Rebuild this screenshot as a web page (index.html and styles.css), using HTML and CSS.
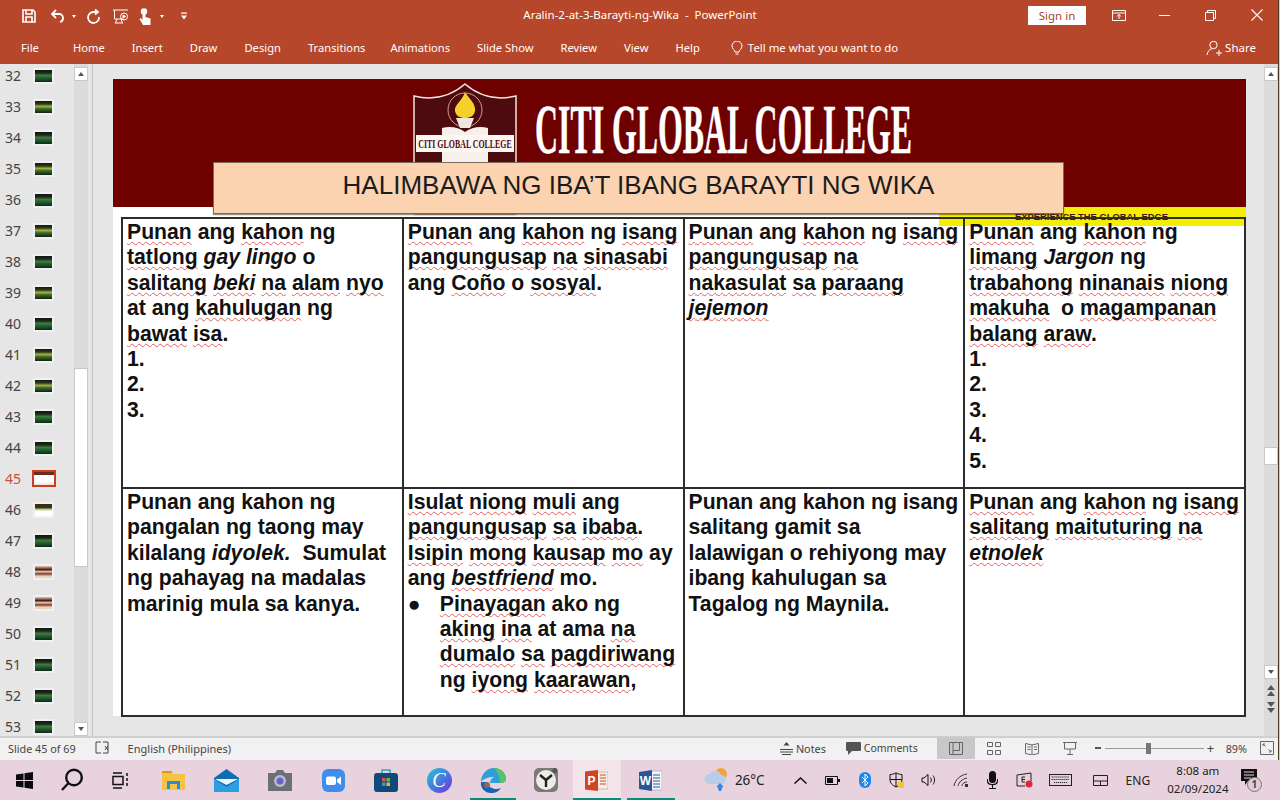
FILE: index.html
```html
<!DOCTYPE html>
<html lang="en">
<head>
<meta charset="utf-8">
<title>Aralin-2-at-3-Barayti-ng-Wika - PowerPoint</title>
<link rel="stylesheet" href="styles.css">
</head>
<body>
<div class="app">
  <header class="ribbon">
    <div class="titlebar">
      <div class="qat">
        <svg class="q q-save" width="16" height="16" viewBox="0 0 16 16" fill="none" stroke="#fff" stroke-width="1.6"><path d="M2 2h10l2 2v10H2z"/><path d="M5 2v4h6V2M5 14V9h6v5"/></svg>
        <svg class="q q-undo" width="16" height="16" viewBox="0 0 16 16" fill="none" stroke="#fff" stroke-width="1.8"><path d="M6 2 2 6l4 4"/><path d="M2 6h7a4 4 0 0 1 4 4 4 4 0 0 1-3 4"/></svg>
        <span class="caret q-c1"></span>
        <svg class="q q-redo" width="16" height="16" viewBox="0 0 16 16" fill="none" stroke="#fff" stroke-width="1.8"><path d="M10 1.500 13 4l-3 2.500"/><path d="M12 4H8a5.500 5.500 0 1 0 6 5"/></svg>
        <svg class="q q-show" width="17" height="17" viewBox="0 0 17 17" fill="none" stroke="#fff" stroke-width="1"><path d="M1 2h15M2.500 2v9h9M5 11l-1.500 4M9 11l1.500 4M3 15h8"/><circle cx="12" cy="8.500" r="3.500"/><path d="m11 7 2.500 1.500L11 10z" fill="#fff"/></svg>
        <svg class="q q-touch" width="13" height="17" viewBox="0 0 13 17" fill="#fff"><circle cx="5" cy="3.500" r="3.200"/><path d="M3.500 4h3v5l5 1.500V17H4L.5 11l1-1 2 2z"/></svg>
        <span class="caret q-c2"></span>
        <svg class="q q-cust" width="6" height="8" viewBox="0 0 7 8" fill="#fff"><path d="M0 0h7v1.300H0zM0 3.500h7L3.500 8z"/></svg>
      </div>
      <div class="doctitle">Aralin-2-at-3-Barayti-ng-Wika&nbsp; -&nbsp; PowerPoint</div>
      <div class="winctl">
        <button class="signin">Sign in</button>
        <svg class="wc wc-opt" width="14" height="11" viewBox="0 0 14 11" fill="none" stroke="#fff"><path d="M.5.500h13v10H.5zM.5 3h13M7 9V4.500M5 6.500l2-2 2 2"/></svg>
        <svg class="wc wc-min" width="11" height="1" viewBox="0 0 11 1"><path d="M0 0h11v1H0z" fill="#fff"/></svg>
        <svg class="wc wc-max" width="11" height="11" viewBox="0 0 11 11" fill="none" stroke="#fff"><path d="M.5 2.500h8v8h-8zM2.500 2.500v-2h8v8h-2"/></svg>
        <svg class="wc wc-close" width="12" height="12" viewBox="0 0 12 12" stroke="#fff" stroke-width="1.100"><path d="m.5.500 11 11M11.500.500l-11 11"/></svg>
      </div>
    </div>
    <nav class="tabs">
      <span class="tab tab-file">File</span>
      <span class="tab">Home</span><span class="tab">Insert</span><span class="tab">Draw</span><span class="tab">Design</span><span class="tab">Transitions</span><span class="tab tab-anim">Animations</span><span class="tab">Slide Show</span><span class="tab">Review</span><span class="tab">View</span><span class="tab">Help</span>
      <span class="tellme">
        <svg width="12" height="15" viewBox="0 0 12 15" fill="none" stroke="#fff"><path d="M4 11c0-2-3-3-3-6a5 5 0 0 1 10 0c0 3-3 4-3 6zM4.500 13h3"/></svg>
        <span class="tellme-t">Tell me what you want to do</span>
      </span>
      <span class="share">
        <svg width="16" height="16" viewBox="0 0 16 16" fill="none" stroke="#fff"><circle cx="7.500" cy="5" r="3.700"/><path d="M1 15c.5-3.500 2.500-6 5-6.200M10 13h6M13 10v6"/></svg>
        Share
      </span>
    </nav>
  </header>

  <main class="workspace">
    <aside class="pane">
      <ol class="thumbs">
        <li class="row"><span class="num">32</span><span class="thumb t-green"></span></li>
        <li class="row"><span class="num">33</span><span class="thumb t-yel"></span></li>
        <li class="row"><span class="num">34</span><span class="thumb t-green"></span></li>
        <li class="row"><span class="num">35</span><span class="thumb t-yel"></span></li>
        <li class="row"><span class="num">36</span><span class="thumb t-green"></span></li>
        <li class="row"><span class="num">37</span><span class="thumb t-yel"></span></li>
        <li class="row"><span class="num">38</span><span class="thumb t-green"></span></li>
        <li class="row"><span class="num">39</span><span class="thumb t-yel"></span></li>
        <li class="row"><span class="num">40</span><span class="thumb t-green"></span></li>
        <li class="row"><span class="num">41</span><span class="thumb t-yel"></span></li>
        <li class="row"><span class="num">42</span><span class="thumb t-yel"></span></li>
        <li class="row"><span class="num">43</span><span class="thumb t-green"></span></li>
        <li class="row"><span class="num">44</span><span class="thumb t-green"></span></li>
        <li class="row row-active"><span class="num">45</span><span class="thumb t-active"></span></li>
        <li class="row"><span class="num">46</span><span class="thumb t-white"></span></li>
        <li class="row"><span class="num">47</span><span class="thumb t-green"></span></li>
        <li class="row"><span class="num">48</span><span class="thumb t-peach"></span></li>
        <li class="row"><span class="num">49</span><span class="thumb t-peach"></span></li>
        <li class="row"><span class="num">50</span><span class="thumb t-green"></span></li>
        <li class="row"><span class="num">51</span><span class="thumb t-green"></span></li>
        <li class="row"><span class="num">52</span><span class="thumb t-green"></span></li>
        <li class="row"><span class="num">53</span><span class="thumb t-green"></span></li>
      </ol>
      <div class="sb sb-left">
        <span class="sbbtn up"></span>
        <span class="sbthumb"></span>
        <span class="sbbtn down"></span>
      </div>
    </aside>

    <section class="editor">
      <article class="slide">
        <div class="banner">
          <svg class="crest" width="104" height="132" viewBox="0 0 104 132">
            <path d="M1 13Q30 20 52 1Q74 20 103 13V132H1Z" fill="#4d0b10" stroke="#f3e3dc" stroke-width="1.500"/>
            <circle cx="52" cy="27" r="17" fill="none" stroke="#d9a08e"/>
            <path d="M52 9c4 7 11 11 10 19-1 5-5 7-10 7s-9-2-10-7c-1-6 7-10 10-19z" fill="#f3d12a"/>
            <path d="M43 35h18l-4 10h-10z" fill="#efe6e0"/>
            <path d="M29 45q13-3 23 4q10-7 23-4v80H29z" fill="#f6efea"/>
            <rect x="3" y="52" width="98" height="17" fill="#fbf7f3"/>
            <text class="crest-text" transform="translate(52 65) scale(1 1.500)" text-anchor="middle">CITI GLOBAL COLLEGE</text>
          </svg>
          <h1 class="college">CITI GLOBAL COLLEGE</h1>
        </div>
        <div class="yellow">EXPERIENCE THE GLOBAL EDGE</div>
        <div class="peach">HALIMBAWA NG IBA’T IBANG BARAYTI NG WIKA</div>
        <table class="grid">
          <tr class="r1">
            <td><u>Punan</u> ang <u>kahon</u> ng<br><u>tatlong</u> <i>gay lingo</i> o<br><u>salitang</u> <i><u>beki</u></i> <u>na</u> <u>alam</u> <u>nyo</u><br>at ang <u>kahulugan</u> ng<br><u>bawat</u> <u>isa</u>.<br>1.<br>2.<br>3.</td>
            <td><u>Punan</u> ang <u>kahon</u> ng <u>isang</u><br><u>pangungusap</u> <u>na</u> <u>sinasabi</u><br>ang <u>Coño</u> o <u>sosyal</u>.</td>
            <td><u>Punan</u> ang <u>kahon</u> ng <u>isang</u><br><u>pangungusap</u> <u>na</u><br><u>nakasulat</u> <u>sa</u> <u>paraang</u><br><i><u>jejemon</u></i></td>
            <td><u>Punan</u> ang <u>kahon</u> ng<br><u>limang</u> <i>Jargon</i> ng<br><u>trabahong</u> <u>ninanais</u> <u>niong</u><br><u>makuha</u>&nbsp; o <u>magampanan</u><br><u>balang</u> <u>araw</u>.<br>1.<br>2.<br>3.<br>4.<br>5.</td>
          </tr>
          <tr class="r2">
            <td>Punan ang kahon ng<br>pangalan ng taong may<br>kilalang <i>idyolek.</i>&nbsp; Sumulat<br>ng pahayag na madalas<br>marinig mula sa kanya.</td>
            <td><u>Isulat</u> <u>niong</u> <u>muli</u> ang<br><u>pangungusap</u> <u>sa</u> <u>ibaba</u>.<br><u>Isipin</u> <u>mong</u> <u>kausap</u> <u>mo</u> ay<br>ang <i><u>bestfriend</u></i> mo.
              <div class="bullet"><span class="dot">●</span><span><u>Pinayagan</u> ako ng<br><u>aking</u> <u>ina</u> at ama <u>na</u><br><u>dumalo</u> <u>sa</u> <u>pagdiriwang</u><br>ng <u>iyong</u> <u>kaarawan</u>,</span></div>
            </td>
            <td>Punan ang kahon ng isang<br>salitang gamit sa<br>lalawigan o rehiyong may<br>ibang kahulugan sa<br>Tagalog ng Maynila.</td>
            <td><u>Punan</u> ang <u>kahon</u> ng <u>isang</u><br><u>salitang</u> <u>maituturing</u> <u>na</u><br><i><u>etnolek</u></i></td>
          </tr>
        </table>
      </article>
    </section>

    <div class="sb sb-right">
      <span class="sbbtn up"></span>
      <span class="sbthumb"></span>
      <span class="sbbtn down"></span>
      <svg class="pg" width="10" height="12" viewBox="0 0 10 12" fill="#555"><path d="M5 0l4 5H1zM5 6l4 5H1z"/></svg>
      <svg class="pg" width="10" height="12" viewBox="0 0 10 12" fill="#555"><path d="M1 0h8L5 5zM1 6h8l-4 5z"/></svg>
    </div>
  </main>

  <footer class="status">
    <span class="st-slide">Slide 45 of 69</span>
    <svg class="st-spell" width="15" height="14" viewBox="0 0 15 14" fill="none" stroke="#444"><path d="M6 1H1v11h5M8 1h5v11H8M10 5l3 4M13 5l-3 4"/></svg>
    <span class="st-lang">English (Philippines)</span>
    <span class="st-right">
      <svg class="st-notes" width="13" height="13" viewBox="0 0 13 13" fill="none" stroke="#444"><path d="M0 7.500h13M0 10h13M2 12.500h9"/><path d="m6.500 0 3 3.500h-6z" fill="#444" stroke="none"/></svg>
      <span class="st-t">Notes</span>
      <svg class="st-comm" width="15" height="13" viewBox="0 0 15 13" fill="#555"><path d="M1 0h13a1 1 0 0 1 1 1v7a1 1 0 0 1-1 1H6l-4 4V9H1a1 1 0 0 1-1-1V1a1 1 0 0 1 1-1z"/></svg>
      <span class="st-t st-t-comm">Comments</span>
      <span class="view view-on"><svg width="14" height="13" viewBox="0 0 14 13" fill="none" stroke="#666"><path d="M.5.500h13v12H.5zM4 .5v8h6.500v-8M4 8.500v4"/></svg></span>
      <span class="view"><svg width="14" height="13" viewBox="0 0 14 13" fill="none" stroke="#666"><path d="M.5.500h5v4h-5zM8.500.500h5v4h-5zM.5 8.500h5v4h-5zM8.500 8.500h5v4h-5z"/></svg></span>
      <span class="view"><svg width="14" height="13" viewBox="0 0 14 13" fill="none" stroke="#666"><path d="M.5 1.500 7 3l6.500-1.500v10L7 13 .5 11.500zM7 3v10M2.500 5h3M2.500 7.500h3M9 5h3M9 7.500h3"/></svg></span>
      <span class="view"><svg width="14" height="13" viewBox="0 0 14 13" fill="none" stroke="#666"><path d="M0 .5h14M1.500 .5v6.500h11V.5M7 7v5M4 12.500h6"/></svg></span>
      <span class="zm zm-minus"></span>
      <span class="slider"><span class="knob"></span></span>
      <span class="zm zm-plus">+</span>
      <span class="pct">89%</span>
      <svg class="fit" width="14" height="14" viewBox="0 0 14 14" fill="none" stroke="#666"><path d="M.5.500h13v13H.5zM3 3l2.500 2.500M3 3v2M3 3h2M11 11 8.500 8.500M11 11V9M11 11H9"/></svg>
    </span>
  </footer>

  <div class="taskbar">
    <span class="tb"><svg width="17" height="17" viewBox="0 0 17 17" fill="#0a0a0a"><path d="M0 2.500 7.500 1.500v6.500H0zM8.500 1.300 17 0v8H8.500zM0 9h7.500v6.500L0 14.500zM8.500 9H17v8l-8.500-1.300z"/></svg></span>
    <span class="tb"><svg width="24" height="24" viewBox="0 0 24 24" fill="none" stroke="#111" stroke-width="2.400"><circle cx="14" cy="9.500" r="7.800"/><path d="m8.500 15-6.500 7"/></svg></span>
    <span class="tb"><svg width="17" height="17" viewBox="0 0 17 17" fill="none" stroke="#111" stroke-width="1.500"><path d="M1 1h9M1 16h9M1 4.500h10v8H1zM15 1v3M15 6v3M15 11v3"/></svg></span>
    <span class="app-i first"><svg width="23" height="20" viewBox="0 0 23 20"><path d="M0 2h9l2 2H23v16H0z" fill="#f6c445"/><path d="M0 1h10v2H0z" fill="#d99a1c"/><path d="M5 11h13v8h-3v-5H8v5H5z" fill="#2b8bd6"/></svg></span>
    <span class="app-i"><svg width="25" height="23" viewBox="0 0 25 23"><path d="M12.500 0 25 9v14H0V9z" fill="#0f6db5"/><path d="M1 10h23L12.500 16z" fill="#eaf4fb"/><path d="M0 10l12.500 8L25 10v13H0z" fill="#2b9fe0"/></svg></span>
    <span class="app-i"><svg width="24" height="21" viewBox="0 0 24 21"><path d="M0 3h7l2-3h6l2 3h7v18H0z" fill="#6a6f78"/><circle cx="12" cy="11" r="6" fill="#b9bccd"/><circle cx="12" cy="11" r="3.500" fill="#6a63c9"/></svg></span>
    <span class="app-i"><svg width="23" height="23" viewBox="0 0 23 23"><rect width="23" height="23" rx="6" fill="#3f8ded"/><rect x="4" y="7.500" width="10" height="8.500" rx="2" fill="#fff"/><path d="m15 10.500 4-3v8.500l-4-3z" fill="#fff"/></svg></span>
    <span class="app-i"><svg width="24" height="24" viewBox="0 0 24 24"><path d="M8 5V2h8v3" fill="none" stroke="#2aa4c8" stroke-width="1.500"/><rect y="5" width="24" height="19" rx="3" fill="#0f4a78"/><path d="M8 10h3.500v3.500H8z" fill="#e0553a"/><path d="M12.500 10H16v3.500h-3.500z" fill="#74b53c"/><path d="M8 14.500h3.500V18H8z" fill="#2a9ad8"/><path d="M12.500 14.500H16V18h-3.500z" fill="#f2b91e"/></svg></span>
    <span class="app-i"><svg width="25" height="25" viewBox="0 0 25 25"><defs><linearGradient id="cv" x1="0" y1="0" x2="1" y2="1"><stop offset="0" stop-color="#26c6d6"/><stop offset=".6" stop-color="#4a6fe0"/><stop offset="1" stop-color="#7a2fd0"/></linearGradient></defs><circle cx="12.500" cy="12.500" r="12.500" fill="url(#cv)"/><text class="canva" x="12" y="19" text-anchor="middle">C</text></svg></span>
    <span class="app-i app-edge"><svg width="26" height="25" viewBox="0 0 26 25"><path d="M1 14C1 6 7 0 14 0c7 0 12 5 12 11 0 3-3 4-6 4H10c0-4 4-6 4-6-6 0-11 2-13 5z" fill="#2f9fd8"/><path d="M14 0c7 0 12 5 12 11 0 3-3 4-6 4 0-7-3-12-6-15z" fill="#55c46a"/><path d="M1 14c-1 6 4 11 10 11 5 0 8-2 10-5-4 2-8 1-11-1-2-2-2-3-2-5-3 0-5 0-7 0z" fill="#1663b8"/><circle cx="7" cy="17" r="3" fill="#8a6a5a"/></svg></span>
    <span class="app-i"><svg width="24" height="24" viewBox="0 0 24 24"><rect width="24" height="24" rx="5" fill="#7a7a7a"/><circle cx="12" cy="12" r="10" fill="#efece6"/><path d="M12 12 6 7M12 12l6-5M12 12v7" stroke="#222" stroke-width="2.400" fill="none"/><circle cx="21" cy="2.500" r="2.500" fill="#555"/></svg></span>
    <span class="tb-ppt"><svg width="23" height="21" viewBox="0 0 23 21"><path d="M9 2h14v17H9z" fill="#f4ede8" stroke="#d0b9ab"/><path d="M15 5h6M15 8h6M15 11h6M15 14h6" stroke="#d04a26"/><path d="M0 1.500 13 0v21L0 19.500z" fill="#d04423"/><text class="ppt-l" x="6.500" y="15" text-anchor="middle">P</text></svg></span>
    <span class="tb-word"><svg width="23" height="21" viewBox="0 0 23 21"><path d="M9 1h14v19H9z" fill="#f6f6f8" stroke="#b6bdcb"/><path d="M14 5h7M14 8h7M14 11h7M14 14h7M14 17h7" stroke="#2a5699"/><path d="M0 2 13 0v21L0 19z" fill="#2a5699"/><text class="ppt-l" x="6.500" y="15" text-anchor="middle">W</text></svg></span>
    <span class="weather">
      <svg width="24" height="26" viewBox="0 0 24 26"><circle cx="17" cy="7" r="6" fill="#f2a23a"/><path d="M5 17a5 5 0 0 1 1-10 6 6 0 0 1 11 1 4.500 4.500 0 0 1 1 9z" fill="#b9cce8"/><path d="M13 19l3-3 3 3-2 5h-2z" fill="#3a85e0"/></svg>
      <span>26°C</span>
    </span>
    <div class="tray">
      <span class="ti"><svg width="13" height="7" viewBox="0 0 13 7" fill="none" stroke="#111" stroke-width="1.500"><path d="m.5 6.500 6-5.500 6 5.500"/></svg></span>
      <span class="ti"><svg width="15" height="9" viewBox="0 0 15 9" fill="none" stroke="#111"><path d="M.5.500h12v8H.5z"/><path d="M2 2h6v5H2zM13 3h2v3h-2z" fill="#111" stroke="none"/></svg></span>
      <span class="ti"><svg width="12" height="16" viewBox="0 0 12 16"><rect width="12" height="16" rx="6" fill="#1f87e8"/><path d="m3 5 6 6-3 3V2l3 3-6 6" fill="none" stroke="#fff"/></svg></span>
      <span class="ti"><svg width="16" height="16" viewBox="0 0 16 16" fill="none" stroke="#111"><path d="M7 .8c-2 1.200-4 1.700-6 1.700v5c0 4 3 6 6 7.500 3-1.500 6-3.500 6-7.500v-5c-2 0-4-.5-6-1.700zM7 1v14M1 7.500h12"/><rect x="9" y="10" width="6" height="6" fill="#f3c62f" stroke="none"/></svg></span>
      <span class="ti"><svg width="16" height="14" viewBox="0 0 16 14" fill="none" stroke="#111"><path d="M1 5v4h2l4 3.500v-11L3 5zM9.500 4.500c1 1.500 1 3.500 0 5M12 2.500c2 2.500 2 6.500 0 9"/></svg></span>
      <span class="ti"><svg width="15" height="14" viewBox="0 0 15 14" fill="none" stroke="#333"><path d="M1 13C2 7 7 2 14 1M5 13c1-4 4-7 9-8M9 13c0-2 2-4 5-4"/><path d="M12 11h3v3h-3z" fill="#333" stroke="none"/></svg></span>
      <span class="ti"><svg width="11" height="18" viewBox="0 0 11 18" fill="#111"><rect x="2" width="7" height="12" rx="3.500"/><path d="M0 8h1v1.500c0 2.500 2 3.500 4.500 3.500s4.500-1 4.500-3.500V8h1v2c0 3-2 4-5 4.200V17h3v1H2v-1h3v-2.800C2 14 0 13 0 10z"/></svg></span>
      <span class="ti"><svg width="17" height="16" viewBox="0 0 17 16" fill="none" stroke="#222"><path d="M1 3 15 1v8M1 3v11h8"/><path d="M9 5H6v5h3M6 7.500h3"/><circle cx="13" cy="12" r="3.500" fill="#e0263c" stroke="none"/></svg></span>
      <span class="ti ti-kb"><svg width="23" height="12" viewBox="0 0 23 12" fill="none" stroke="#222"><rect x=".5" y=".5" width="22" height="11"/><path d="M2.500 3h18M2.500 5.500h18M5 8.500h13" stroke-dasharray="1.200 .8"/></svg></span>
      <span class="ti ti-pad"><svg width="15" height="11" viewBox="0 0 15 11" fill="none" stroke="#222"><path d="M.5.500h14v10H.5zM.5 6h14M7.500 6v4.500"/></svg></span>
      <span class="eng">ENG</span>
      <span class="clock"><span>8:08 am</span><span>02/09/2024</span></span>
      <span class="notif">
        <svg width="16" height="17" viewBox="0 0 16 17"><path d="M0 0h16v12H7l-3 4v-4H0z" fill="#111"/><path d="M3 3h10M3 6h10M3 9h7" stroke="#e8d4de"/></svg>
        <span class="badge">1</span>
      </span>
    </div>
  </div>
  <div class="edge"></div>
</div>
</body>
</html>
```
FILE: styles.css
```css
* { box-sizing: border-box; }
html, body { margin: 0; height: 100%; overflow: hidden; }
body { font-family: "Noto Sans", "Open Sans", sans-serif; background: #e6e6e6; }
.app { position: relative; width: 1280px; height: 800px; display: flex; flex-direction: column; }
button { font: inherit; border: 0; }

/* ribbon */
.ribbon { background: #b7472a; color: #fff; height: 64px; flex: none; }
.titlebar { height: 32px; display: flex; align-items: center; position: relative; }
.qat { display: flex; align-items: center; padding-left: 21px; }
.q { flex: none; display: block; }
.q-undo { margin-left: 13px; }
.q-c1 { margin-left: 6px; }
.q-redo { margin-left: 9px; }
.q-show { margin-left: 11px; }
.q-touch { margin-left: 10px; }
.q-c2 { margin-left: 8px; }
.q-cust { margin-left: 17px; }
.caret { width: 0; height: 0; border: 2.500px solid transparent; border-top: 3px solid #fff; border-bottom: 0; }
.doctitle { position: absolute; left: 0; right: 0; top: 7px; text-align: center; font-size: 11.500px; line-height: 16px; }
.winctl { margin-left: auto; display: flex; align-items: center; padding: 0 17px 2px 0; }
.signin { width: 58px; height: 19px; background: #fff; color: #a8452c; font-size: 11.500px; line-height: 19px; padding: 0; }
.wc { display: block; flex: none; }
.wc-opt { margin-left: 26px; }
.wc-min { margin-left: 33px; }
.wc-max { margin-left: 35px; }
.wc-close { margin-left: 35px; }
.tabs { height: 32px; display: flex; align-items: center; font-size: 11.200px; line-height: 16px; padding-left: 21px; }
.tab { margin-right: 27px; white-space: nowrap; }
.tab-file { margin-right: 34px; }
.tab-anim { margin-left: -2px; }
.tellme { display: flex; align-items: center; gap: 5px; margin-left: 4px; white-space: nowrap; }
.tellme-t { font-size: 11.400px; }
.share { margin-left: auto; margin-right: 24px; display: flex; align-items: center; gap: 3px; font-size: 11.500px; }

/* workspace */
.workspace { flex: none; height: 674px; display: flex; overflow: hidden; border-bottom: 2px solid #d0d0d0; }
.pane { width: 93px; flex: none; display: flex; border-right: 1px solid #c4c4c4; overflow: hidden; }
.thumbs { list-style: none; margin: -4px 0 0; padding: 0; width: 74px; flex: none; }
.row { height: 31px; display: flex; align-items: center; }
.num { width: 35px; padding-left: 5px; font-size: 14px; color: #444; line-height: 20px; }
.row-active .num { color: #c8503c; }
.thumb { display: block; width: 17px; height: 12px; box-shadow: 0 0 0 2px #f1f1f1; }
.t-green { background: linear-gradient(#10180f 0, #1c2a16 25%, #3e7a42 45%, #1e5a2c 70%, #0c2a18 100%); }
.t-yel { background: linear-gradient(#141a10 0, #2a3a18 25%, #a8b040 45%, #3a6a2a 65%, #10220f 100%); }
.t-white { background: linear-gradient(#3a2a14 0, #3a3418 30%, #b8c880 45%, #fff 60%); }
.t-peach { background: linear-gradient(#e8c8ac 0, #4a1a18 30%, #f0ccb0 48%, #7a3a30 65%, #f3d3b6 85%); }
.t-active { width: 24px; height: 17px; margin-left: -3px; border: 2px solid #c8401f; box-shadow: none; background: linear-gradient(#6a2a20 0 22%, #fff 22% 75%, #e8e0d8 100%); }

.sb { background: #dbdbdb; flex: none; width: 14px; display: flex; flex-direction: column; align-items: stretch; }
.sb-left { height: 672px; }
.sb-right { margin-right: 2px; }
.sbbtn { height: 14px; background: #fff; border: 1px solid #c8c8c8; flex: none; display: flex; align-items: center; justify-content: center; }
.sbbtn::before { content: ""; border: 3.500px solid transparent; }
.sbbtn.up::before { border-bottom: 4px solid #555; border-top: 0; }
.sbbtn.down::before { border-top: 4px solid #555; border-bottom: 0; }
.sb-left .up { margin-top: 3px; }
.sb-left .sbthumb { display: block; height: 199px; margin-top: 287px; background: #fff; border: 1px solid #c8c8c8; }
.sb-left .down { margin-top: auto; }
.sb-right .up { margin-top: 3px; }
.sb-right .sbthumb { display: block; height: 18px; margin-top: 366px; background: #fff; border: 1px solid #c8c8c8; }
.sb-right .down { margin-top: 200px; }
.pg { margin: 6px auto 0; display: block; }
.pg + .pg { margin-top: 5px; }

.editor { flex: 1; min-width: 0; padding: 15px 18px 0 20px; background: #e6e6e6; }
.slide { width: 1133px; height: 637px; background: #fff; position: relative; }
.banner { height: 128px; background: #6f0000; display: flex; align-items: flex-start; padding: 4px 0 0 300px; }
.crest { flex: none; display: block; overflow: visible; }
.crest-text { font: bold 7.900px "Liberation Serif", serif; fill: #4d0b10; }
.college { margin: 22px 0 0 18px; width: 375px; flex: none; font: bold 70px/50px "Liberation Serif", serif; color: #fff; white-space: nowrap; transform: scaleX(.455); transform-origin: left center; -webkit-text-stroke: .5px #fff; }
.yellow { position: absolute; left: 826px; top: 128px; width: 307px; height: 19px; background: #f4ee00; font: bold 9.400px/19px "Liberation Sans", Arial, sans-serif; color: #4a1410; padding-left: 76px; white-space: nowrap; }
.peach { position: absolute; z-index: 2; left: 100px; top: 83px; width: 851px; height: 52px; background: #fbd3b1; border: 1px solid #7c6a58; box-shadow: 0 1px 1px rgba(60,40,20,.5); font: 26px/44px "Liberation Sans", Arial, sans-serif; color: #1c1c1c; text-align: center; white-space: nowrap; }
.grid { position: relative; margin: 10px 0 0 8px; width: 1125px; border-collapse: collapse; table-layout: fixed; font: bold 21.200px/25.400px "Liberation Sans", Arial, sans-serif; color: #111; }
.grid td { border: 2px solid #2c2c2c; vertical-align: top; padding: 0 4px 0 4px; white-space: nowrap; }
.r1 { height: 270px; }
.r2 { height: 228px; }
.grid u { text-decoration: underline wavy #e06060 1px; text-underline-offset: 2px; text-decoration-skip-ink: none; }
.bullet { display: flex; }
.dot { width: 32px; flex: none; }

/* status */
.status { height: 22px; flex: none; background: #f1f1f1; display: flex; align-items: center; font-size: 10.800px; color: #444; padding: 0 0 2px 8px; white-space: nowrap; position: relative; }
.st-spell { margin-left: 19px; }
.st-lang { margin-left: 18px; font-size: 11px; }
.st-right { margin-left: auto; display: flex; align-items: center; height: 100%; padding-right: 6px; }
.st-notes { margin-right: 3px; }
.st-comm { margin-left: 20px; margin-right: 3px; }
.st-t-comm { font-size: 10.500px; }
.view { width: 38px; height: 22px; display: flex; align-items: center; justify-content: center; }
.view-on { background: #c8c8c8; margin-left: 19px; }
.zm { color: #444; }
.zm-minus { width: 6px; height: 2px; background: #555; margin-left: 6px; }
.slider { width: 99px; height: 1px; background: #999; margin-left: 4px; position: relative; }
.knob { position: absolute; left: 41px; top: -5px; width: 5px; height: 11px; background: #777; }
.zm-plus { margin-left: 3px; font-size: 13px; width: 10px; }
.pct { margin-left: 9px; }
.fit { margin-left: 13px; }

/* taskbar */
.taskbar { height: 40px; flex: none; background: #e8d2dd; display: flex; align-items: center; color: #222; font-size: 13px; position: relative; }
.tb { width: 48px; height: 40px; display: flex; align-items: center; justify-content: center; flex: none; }
.app-i { width: 53.300px; height: 40px; display: flex; align-items: center; justify-content: center; flex: none; position: relative; }
.app-i.first { margin-left: 2.500px; }
.app-edge::after { content: ""; position: absolute; left: 4px; right: 4px; bottom: 0; height: 2px; background: #0c8c78; }
.tb-ppt, .tb-word { width: 48px; height: 40px; display: flex; align-items: center; justify-content: center; flex: none; position: relative; }
.tb-ppt { background: #f3e4ea; }
.tb-word { margin-left: 6px; }
.tb-ppt::after, .tb-word::after { content: ""; position: absolute; left: 0; right: 0; bottom: 0; height: 2px; background: #0c8c78; }
.canva { font: italic 20px "Liberation Serif", serif; fill: #fff; }
.ppt-l { font: bold 12px "Liberation Sans", Arial, sans-serif; fill: #fff; }
.weather { display: flex; align-items: center; gap: 7px; margin-left: 29px; width: 81px; flex: none; font-size: 13.500px; }
.tray { display: flex; align-items: center; height: 40px; }
.ti { width: 32px; display: flex; justify-content: center; align-items: center; flex: none; }
.ti-kb { margin-left: 4px; }
.ti-pad { margin-left: 8px; }
.eng { width: 42px; text-align: center; font-size: 12px; }
.clock { width: 78px; display: flex; flex-direction: column; align-items: center; font-size: 11.500px; line-height: 18px; white-space: nowrap; }
.notif { position: relative; margin-left: 4px; display: block; width: 24px; height: 22px; }
.badge { position: absolute; left: 6px; top: 8px; width: 15px; height: 15px; border-radius: 50%; border: 1px solid #777; font-size: 10px; font-weight: 700; line-height: 13px; text-align: center; color: #444; background: #e0ccd6; }
.edge { position: absolute; right: 0; top: 0; bottom: 40px; width: 2px; background: #f0d92a; border-left: 1px solid #4a3a20; }
```
